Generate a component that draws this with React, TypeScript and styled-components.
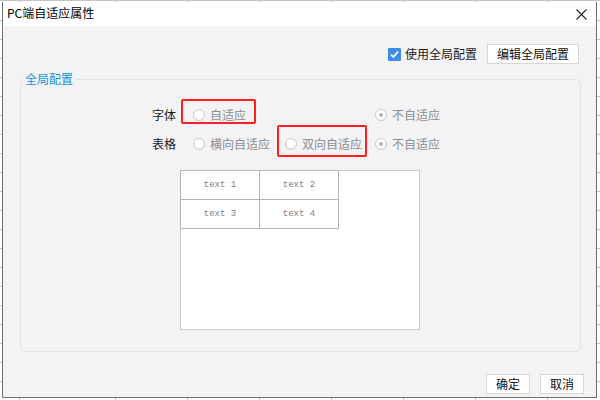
import React from 'react';
import styled, { createGlobalStyle } from 'styled-components';

const GlobalStyle = createGlobalStyle`
  html, body {
    margin: 0;
    padding: 0;
    background: #ffffff;
  }

  * {
    box-sizing: border-box;
  }
`;

const Desktop = styled.div`
  width: 600px;
  height: 400px;
  padding: 2px 3px 2px 2px;
  background-color: #ffffff;
  background-image:
    repeating-linear-gradient(to bottom, transparent 0 18px, #c4c4c4 18px 19px),
    repeating-linear-gradient(to right, transparent 0 71px, #c4c4c4 71px 72px);
  background-position: 0 2px, 44px 0;
  font-family: 'Noto Sans CJK SC', 'Microsoft YaHei', sans-serif;
  font-size: 12px;
  color: #1a1a1a;
`;

const Window = styled.div`
  height: 100%;
  display: flex;
  flex-direction: column;
  border: 1px solid #6f6f6f;
  border-top: none;
  background: #f3f3f5;
`;

const TitleBar = styled.div`
  height: 24px;
  flex: none;
  display: flex;
  align-items: center;
  justify-content: space-between;
  padding: 0 8px 0 4px;
  background: #ffffff;
`;

const Title = styled.span`
  font-size: 12px;
  line-height: 16px;
  color: #000000;
  margin-top: -2px;
`;

const CloseButton = styled.button`
  width: 14px;
  height: 14px;
  padding: 0;
  border: none;
  background: transparent;
  display: flex;
  align-items: center;
  justify-content: center;
  cursor: pointer;
`;

const Body = styled.div`
  flex: 1;
  display: flex;
  flex-direction: column;
`;

const TopBar = styled.div`
  display: flex;
  align-items: center;
  justify-content: flex-end;
  gap: 10px;
  padding: 18px 17px 0 0;
`;

const CheckLabel = styled.label`
  display: flex;
  align-items: center;
  gap: 4px;
  line-height: 16px;
`;

const CheckBox = styled.span`
  width: 13px;
  height: 13px;
  border-radius: 1px;
  background: #3b8de6;
  display: flex;
  align-items: center;
  justify-content: center;
`;

const Button = styled.button<{ $width: number }>`
  width: ${(p) => p.$width}px;
  height: 20px;
  padding: 0;
  border: 1px solid #d6d6d6;
  background: #ffffff;
  font-family: inherit;
  font-size: 12px;
  line-height: 16px;
  color: #111111;
`;

const Group = styled.fieldset`
  margin: 7px 15px 0 17px;
  padding: 13px 0 21px 131px;
  border: 1px solid #e1e1e4;
  border-radius: 5px;
  min-width: 0;
`;

const Legend = styled.legend`
  margin-left: -129px;
  padding: 0 2px;
  font-size: 12px;
  line-height: 16px;
  color: #1196d8;
`;

const OptionGrid = styled.div`
  display: grid;
  grid-template-columns: 41px 92px 90px 1fr;
  grid-auto-rows: 29px;
  align-items: center;
`;

const RowLabel = styled.span`
  color: #1a1a1a;
  line-height: 16px;
`;

const Option = styled.label`
  position: relative;
  display: flex;
  align-items: center;
  gap: 5px;
  color: #8c8c8c;
  line-height: 16px;
`;

const Radio = styled.span<{ $checked?: boolean }>`
  width: 12px;
  height: 12px;
  border-radius: 50%;
  border: 1px solid #cbcbc3;
  background: radial-gradient(circle at 50% 40%, #ffffff 0 45%, #ececea 100%);
  display: flex;
  align-items: center;
  justify-content: center;

  &::after {
    content: '';
    width: 4px;
    height: 4px;
    border-radius: 50%;
    background: ${(p) => (p.$checked ? '#b4b4ae' : 'transparent')};
  }
`;

const Highlight = styled.span<{ $l: number; $t: number; $w: number; $h: number }>`
  position: absolute;
  left: ${(p) => p.$l}px;
  top: ${(p) => p.$t}px;
  width: ${(p) => p.$w}px;
  height: ${(p) => p.$h}px;
  border: 2px solid #ff1f1f;
  border-radius: 2px;
  pointer-events: none;
`;

const Preview = styled.div`
  width: 240px;
  height: 160px;
  margin: 12px 0 0 28px;
  background: #ffffff;
  border: 1px solid #c9c9c9;
`;

const PreviewTable = styled.div`
  display: grid;
  grid-template-columns: 79px 79px;
  grid-auto-rows: 29px;
  width: 159px;
  margin: -1px 0 0 -1px;
`;

const Cell = styled.div`
  display: flex;
  align-items: center;
  justify-content: center;
  border: 1px solid #b4b4b4;
  margin: 0 -1px -1px 0;
  font-family: 'Liberation Mono', 'DejaVu Sans Mono', monospace;
  font-size: 9px;
  color: #7e7e7e;
`;

const Footer = styled.div`
  margin-top: auto;
  display: flex;
  justify-content: flex-end;
  gap: 10px;
  padding: 0 12px 3px 0;
`;

const cells = ['text 1', 'text 2', 'text 3', 'text 4'];

const App = () => {
  return (
    <>
      <GlobalStyle />
      <Desktop>
        <Window>
          <TitleBar>
            <Title>PC端自适应属性</Title>
            <CloseButton aria-label="close">
              <svg width="11" height="11" viewBox="0 0 11 11">
                <path d="M0.5 0.5 L10.5 10.5 M10.5 0.5 L0.5 10.5" stroke="#222" strokeWidth="1.1" />
              </svg>
            </CloseButton>
          </TitleBar>
          <Body>
            <TopBar>
              <CheckLabel>
                <CheckBox>
                  <svg width="11" height="11" viewBox="0 0 11 11">
                    <path d="M2 5.6 L4.4 8 L9 2.6" fill="none" stroke="#ffffff" strokeWidth="1.7" />
                  </svg>
                </CheckBox>
                使用全局配置
              </CheckLabel>
              <Button $width={92}>编辑全局配置</Button>
            </TopBar>

            <Group>
              <Legend>全局配置</Legend>
              <OptionGrid>
                <RowLabel>字体</RowLabel>
                <Option>
                  <Radio />
                  自适应
                  <Highlight $l={-12} $t={-8} $w={75} $h={25} />
                </Option>
                <span />
                <Option>
                  <Radio $checked />
                  不自适应
                </Option>

                <RowLabel>表格</RowLabel>
                <Option>
                  <Radio />
                  横向自适应
                </Option>
                <Option>
                  <Radio />
                  双向自适应
                  <Highlight $l={-8} $t={-11} $w={90} $h={32} />
                </Option>
                <Option>
                  <Radio $checked />
                  不自适应
                </Option>
              </OptionGrid>

              <Preview>
                <PreviewTable>
                  {cells.map((c) => (
                    <Cell key={c}>{c}</Cell>
                  ))}
                </PreviewTable>
              </Preview>
            </Group>

            <Footer>
              <Button $width={44}>确定</Button>
              <Button $width={44}>取消</Button>
            </Footer>
          </Body>
        </Window>
      </Desktop>
    </>
  );
};

export default App;
